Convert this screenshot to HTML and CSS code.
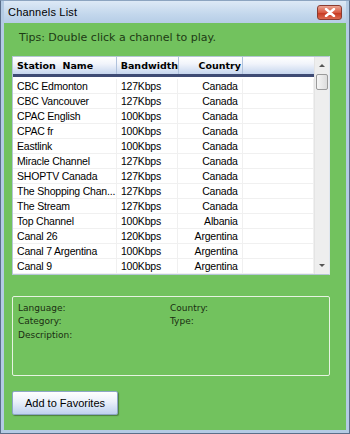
FILE: index.html
```html
<!DOCTYPE html>
<html lang="en">
<head>
    <meta charset="UTF-8">
    <title>Channels List</title>
    <link rel="stylesheet" href="styles.css">
</head>
<body>
    <div class="window">
        <div class="titlebar">
            <span class="title">Channels List</span>
            <span class="close">
                <svg width="12" height="9" viewBox="0 0 12 9"><path d="M2 1 L10 8 M10 1 L2 8" stroke="#fff" stroke-width="2.4" stroke-linecap="round"/></svg>
            </span>
        </div>
        <div class="content">
            <p class="tips">Tips: Double click a channel to play.</p>

            <div class="listbox">
                <div class="list-main">
                    <div class="list-head">
                        <span class="col name">Station&nbsp; Name</span>
                        <span class="col bw">Bandwidth</span>
                        <span class="col country">Country</span>
                        <span class="col rest"></span>
                    </div>
                    <div class="list-body" id="rows"></div>
                </div>
                <div class="scrollbar">
                    <span class="arrow up"></span>
                    <span class="thumb"></span>
                    <span class="track"></span>
                    <span class="arrow down"></span>
                </div>
            </div>

            <div class="info">
                <div class="info-row"><span>Language:</span><span>Country:</span></div>
                <div class="info-row"><span>Category:</span><span>Type:</span></div>
                <div class="info-row"><span>Description:</span></div>
            </div>

            <button class="btn">Add to Favorites</button>
        </div>
    </div>

    <script>
        const channels = [
            ['CBC Edmonton', '127Kbps', 'Canada'],
            ['CBC Vancouver', '127Kbps', 'Canada'],
            ['CPAC English', '100Kbps', 'Canada'],
            ['CPAC fr', '100Kbps', 'Canada'],
            ['Eastlink', '100Kbps', 'Canada'],
            ['Miracle Channel', '127Kbps', 'Canada'],
            ['SHOPTV Canada', '127Kbps', 'Canada'],
            ['The Shopping Chan...', '127Kbps', 'Canada'],
            ['The Stream', '127Kbps', 'Canada'],
            ['Top Channel', '100Kbps', 'Albania'],
            ['Canal 26', '120Kbps', 'Argentina'],
            ['Canal 7 Argentina', '100Kbps', 'Argentina'],
            ['Canal 9', '100Kbps', 'Argentina']
        ];

        const rows = document.getElementById('rows');
        channels.forEach(function(c) {
            const row = document.createElement('div');
            row.className = 'row';
            row.innerHTML = '<span class="col name">' + c[0] + '</span>' +
                '<span class="col bw">' + c[1] + '</span>' +
                '<span class="col country">' + c[2] + '</span>' +
                '<span class="col rest"></span>';
            rows.appendChild(row);
        });
    </script>
</body>
</html>
```

FILE: styles.css
```css
* {
    margin: 0;
    padding: 0;
    box-sizing: border-box;
}
body {
    width: 350px;
    height: 434px;
    overflow: hidden;
    font-family: "Liberation Sans", Arial, sans-serif;
    font-size: 10.5px;
    color: #000;
}
.window {
    height: 434px;
    display: flex;
    flex-direction: column;
    background: #b4cbe4;
    border: 1px solid #5a6f8a;
    border-top-color: #8ca4c0;
    padding: 0 3px 3px 3px;
}
.titlebar {
    height: 22px;
    flex: none;
    display: flex;
    align-items: center;
    justify-content: space-between;
    padding: 0 4px 0 4px;
    background: linear-gradient(#dde9f6, #c3d7ec 60%, #b6cde6);
}
.title {
    font-family: "Liberation Sans", Arial, sans-serif;
    font-size: 11px;
    color: #000;
    letter-spacing: 0.2px;
}
.close {
    width: 25px;
    height: 15px;
    margin-top: 1px;
    display: flex;
    align-items: center;
    justify-content: center;
    border: 1px solid #8a3b30;
    border-radius: 3px;
    background: linear-gradient(#eba594, #d85a42 50%, #c63a22 55%, #dc6a50);
}
.content {
    flex: 1;
    background: #72c25e;
    padding: 0 8px 0 8px;
    display: flex;
    flex-direction: column;
}
.tips {
    font-family: "DejaVu Sans", sans-serif;
    font-size: 11px;
    color: #1d3a14;
    padding: 8px 0 0 7px;
    height: 33px;
}
.listbox {
    height: 219px;
    display: flex;
    background: #fff;
    border: 1px solid #b5c6d6;
    border-right-color: #dfe6ee;
    margin-right: 8px;
}
.list-main {
    flex: 1;
    display: flex;
    flex-direction: column;
    overflow: hidden;
}
.list-head {
    height: 21px;
    display: flex;
    align-items: center;
    background: linear-gradient(#ffffff, #f1f4fb 40%, #c6d6ee);
    border-bottom: 3px solid #3e4b74;
    font-weight: bold;
    font-size: 9.5px;
    font-family: "DejaVu Sans", sans-serif;
}
.list-head .col {
    height: 100%;
    display: flex;
    align-items: center;
    border-right: 1px solid #b0c2dc;
}
.list-head .rest {
    border-right: none;
}
.col.name {
    width: 105px;
    padding-left: 4px;
}
.col.bw {
    width: 62px;
    padding-left: 4px;
}
.col.country {
    width: 65px;
    justify-content: flex-end;
    text-align: right;
    padding-right: 4px;
}
.list-head .col.country {
    padding-right: 1px;
}
.col.rest {
    width: 72px;
}
.list-body {
    padding-top: 2px;
}
.row {
    height: 15px;
    display: flex;
    align-items: center;
    border-bottom: 1px solid #f0f0f0;
    letter-spacing: -0.2px;
}
.row .col {
    height: 100%;
    display: flex;
    align-items: center;
    border-right: 1px solid #f0f0f0;
    white-space: nowrap;
}
.scrollbar {
    width: 15px;
    flex: none;
    display: flex;
    flex-direction: column;
    background: #eeeeee;
    border-left: 1px solid #e4e4e4;
}
.arrow {
    height: 17px;
    flex: none;
    display: flex;
    align-items: center;
    justify-content: center;
}
.arrow::after {
    content: "";
    border-left: 3px solid transparent;
    border-right: 3px solid transparent;
}
.arrow.up::after {
    border-bottom: 3px solid #555;
}
.arrow.down::after {
    border-top: 3px solid #555;
}
.thumb {
    height: 16px;
    margin: 0 1px;
    border: 1px solid #9a9a9a;
    border-radius: 2px;
    background: linear-gradient(90deg, #f6f6f6, #dcdcdc);
}
.track {
    flex: 1;
}
.info {
    height: 80px;
    margin-top: 21px;
    margin-right: 8px;
    border: 1px solid #e6f3e1;
    border-radius: 2px;
    padding: 4px 0 0 5px;
    font-family: "DejaVu Sans", sans-serif;
    font-size: 9px;
    color: #1a2e12;
}
.info-row {
    display: flex;
    height: 13.5px;
    align-items: center;
}
.info-row span:first-child {
    width: 152px;
}
.btn {
    margin-top: 15px;
    width: 106px;
    height: 24px;
    border: 1px solid #8da6c6;
    border-radius: 2px;
    background: linear-gradient(#ffffff, #eaf0fa 45%, #bfd1ef);
    box-shadow: 1px 1px 1px rgba(40, 60, 30, 0.5);
    font-family: "Liberation Sans", Arial, sans-serif;
    font-size: 11px;
    color: #000;
}
```
